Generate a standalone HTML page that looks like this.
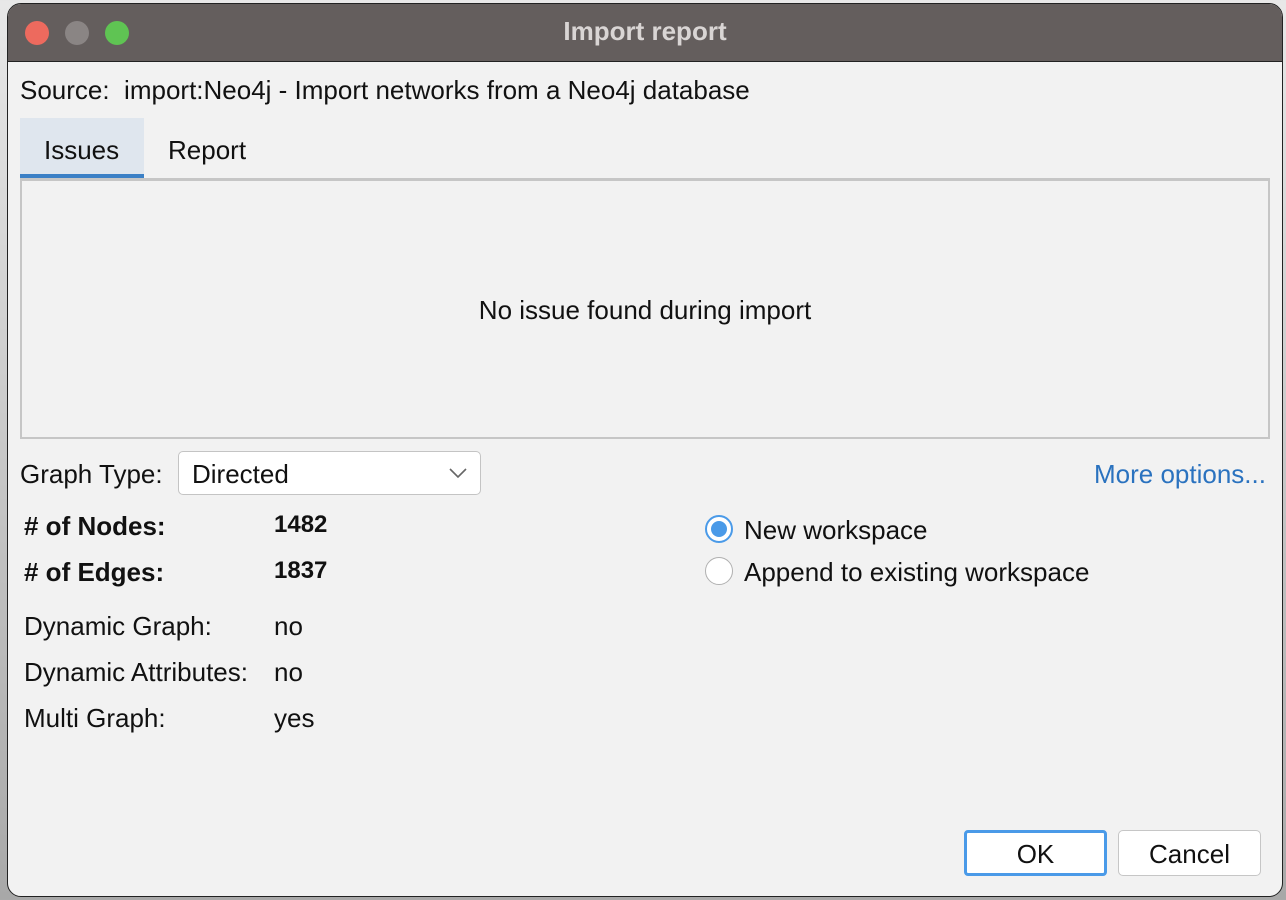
<!DOCTYPE html>
<html><head><meta charset="utf-8"><style>
*{box-sizing:border-box;margin:0;padding:0}
body{width:1286px;height:900px;background:linear-gradient(#e8e8e8,#a8a8a8);position:relative;overflow:hidden;font-family:"Liberation Sans",Arial,sans-serif;color:#111}
.win{position:absolute;left:7px;top:3px;width:1276px;height:894px;border:1px solid #222;border-radius:14px;background:#f2f2f2;overflow:hidden}
.title{position:absolute;left:0;top:0;right:0;height:58px;background:#645e5d;border-bottom:1px solid #222}
.title .t{position:absolute;left:0;right:0;top:12px;text-align:center;color:#d9d5d4;font-weight:bold;font-size:26px}
.dot{position:absolute;top:17px;width:24px;height:24px;border-radius:50%}
.a{position:absolute;font-size:26px;white-space:nowrap;line-height:30px}
.b{font-weight:bold}
</style></head><body>
<div class="win">
<div class="title">
<div class="dot" style="left:17px;background:#ed6a5e"></div>
<div class="dot" style="left:57px;background:#8a8584"></div>
<div class="dot" style="left:97px;background:#5fc453"></div>
<div class="t">Import report</div>
</div>
</div>
<div class="a" style="left:20px;top:75px">Source:&nbsp; import:Neo4j - Import networks from a Neo4j database</div>
<div style="position:absolute;left:20px;top:118px;width:124px;height:58px;background:#dfe6ee"></div>
<div style="position:absolute;left:20px;top:174px;width:124px;height:5px;background:#3b80c6"></div>
<div class="a" style="left:44px;top:135px">Issues</div>
<div class="a" style="left:168px;top:135px">Report</div>
<div style="position:absolute;left:20px;top:178px;width:1250px;height:261px;border:2px solid #c6c6c6;border-top-width:3px"></div>
<div class="a" style="left:0;width:1290px;text-align:center;top:295px">No issue found during import</div>
<div class="a" style="left:20px;top:459px">Graph Type:</div>
<div style="position:absolute;left:178px;top:451px;width:303px;height:44px;background:#fff;border:1px solid #c4c4c4;border-radius:5px"></div>
<div class="a" style="left:192px;top:459px">Directed</div>
<svg style="position:absolute;left:448px;top:466px" width="20" height="14"><path d="M2 3 L10 11 L18 3" fill="none" stroke="#666" stroke-width="1.6"/></svg>
<div class="a" style="left:1094px;top:459px;color:#2a72bf">More options...</div>
<div class="a b" style="left:24px;top:511px"># of Nodes:</div>
<div class="a b" style="left:274px;top:510px;font-size:24px">1482</div>
<div class="a b" style="left:24px;top:557px"># of Edges:</div>
<div class="a b" style="left:274px;top:556px;font-size:24px">1837</div>
<div class="a" style="left:24px;top:611px">Dynamic Graph:</div><div class="a" style="left:274px;top:611px">no</div>
<div class="a" style="left:24px;top:657px">Dynamic Attributes:</div><div class="a" style="left:274px;top:657px">no</div>
<div class="a" style="left:24px;top:703px">Multi Graph:</div><div class="a" style="left:274px;top:703px">yes</div>
<div style="position:absolute;left:705px;top:515px;width:28px;height:28px;border-radius:50%;border:2px solid #4a9ae8;background:#fff"></div>
<div style="position:absolute;left:711px;top:521px;width:16px;height:16px;border-radius:50%;background:#4a9ae8"></div>
<div class="a" style="left:744px;top:515px">New workspace</div>
<div style="position:absolute;left:705px;top:557px;width:28px;height:28px;border-radius:50%;border:1.5px solid #b0b0b0;background:#fff"></div>
<div class="a" style="left:744px;top:557px">Append to existing workspace</div>
<div style="position:absolute;left:964px;top:830px;width:143px;height:46px;border:3px solid #4a9ae8;border-radius:4px;background:#fff"></div>
<div class="a" style="left:964px;width:143px;text-align:center;top:839px">OK</div>
<div style="position:absolute;left:1118px;top:830px;width:143px;height:46px;border:1.5px solid #c6c6c6;border-radius:5px;background:#fff"></div>
<div class="a" style="left:1118px;width:143px;text-align:center;top:839px">Cancel</div>
</body></html>
